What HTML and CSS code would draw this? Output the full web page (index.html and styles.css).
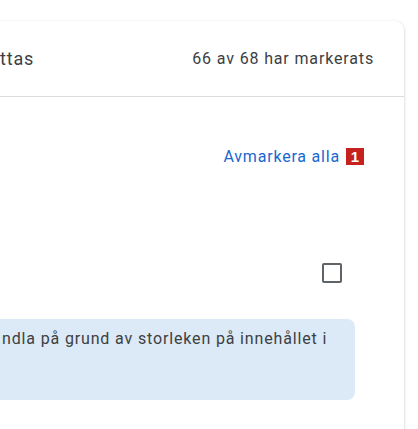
FILE: index.html
```html
<!DOCTYPE html>
<html lang="sv">
<head>
<meta charset="utf-8">
<link rel="stylesheet" href="styles.css">
</head>
<body>
<div class="page">
  <div class="card">
    <div class="header">
      <span class="title">ttas</span>
      <span class="count">66 av 68 har markerats</span>
    </div>
    <div class="body">
      <div class="actions">
        <a class="link" href="#">Avmarkera alla</a>
        <span class="badge">1</span>
      </div>
      <div class="check-row">
        <span class="checkbox"></span>
      </div>
      <div class="notice">ndla på grund av storleken på innehållet i</div>
    </div>
  </div>
</div>
</body>
</html>
```
FILE: styles.css
```css
html, body {
  margin: 0;
  padding: 0;
  background: #ffffff;
  font-family: Roboto, "Noto Sans", Arial, sans-serif;
  overflow: hidden;
}
.page {
  padding: 21px 14px 0 0;
  height: 408px;
}
.card {
  margin-left: -12px;
  height: 430px;
  background: #fff;
  border-radius: 0 9px 0 0;
  box-shadow: 0 1px 2px rgba(60,64,67,0.25), 0 1px 4px rgba(60,64,67,0.12);
}
.header {
  height: 76px;
  display: flex;
  align-items: center;
  justify-content: space-between;
  padding: 0 30px 0 12px;
  border-bottom: 1px solid #dadce0;
  box-sizing: border-box;
}
.title {
  font-size: 18px;
  color: #3c4043;
  letter-spacing: 0.8px;
}
.count {
  font-size: 16px;
  color: #3c4043;
  letter-spacing: 0.85px;
}
.body {
  padding: 0 0 0 12px;
}
.actions {
  display: flex;
  justify-content: flex-end;
  align-items: center;
  gap: 6px;
  padding: 49px 40px 0 0;
  height: 20px;
}
.link {
  color: #1967d2;
  font-size: 16px;
  text-decoration: none;
  letter-spacing: 0.8px;
}
.badge {
  display: inline-flex;
  align-items: center;
  justify-content: center;
  width: 18px;
  height: 17px;
  background: #c5221f;
  color: #fff;
  font-family: "Liberation Sans", Arial, sans-serif;
  font-weight: bold;
  font-size: 15px;
}
.check-row {
  display: flex;
  justify-content: flex-end;
  padding: 97px 62px 0 0;
}
.checkbox {
  width: 20px;
  height: 20px;
  box-sizing: border-box;
  border: 2px solid #5f6368;
  border-radius: 2px;
}
.notice {
  margin: 36px 49px 0 0;
  height: 81px;
  box-sizing: border-box;
  background: #dce9f6;
  border-radius: 0 8px 8px 0;
  padding: 10px 0 0 2px;
  font-size: 16px;
  line-height: 20px;
  color: #3c4043;
  letter-spacing: 0.85px;
}
```
